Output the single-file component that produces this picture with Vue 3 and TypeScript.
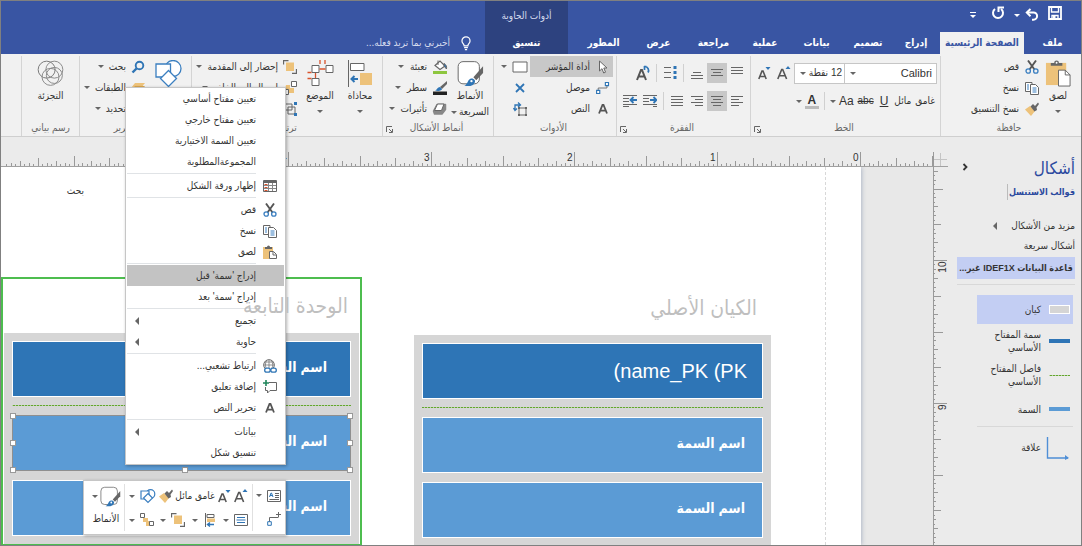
<script setup lang="ts">
import { ref } from 'vue'

interface MenuItem {
  label: string
  icon?: string
  submenu?: boolean
  active?: boolean
}

const tabs: { label: string; size: string }[] = [
  { label: 'إدراج', size: 's' },
  { label: 'تصميم', size: 's' },
  { label: 'بيانات', size: 'm' },
  { label: 'عملية', size: 's' },
  { label: 'مراجعة', size: 'm' },
  { label: 'عرض', size: 'm' },
  { label: 'المطور', size: 'm' },
]

const menuGroups: MenuItem[][] = [
  [
    { label: 'تعيين مفتاح أساسي' },
    { label: 'تعيين مفتاح خارجي' },
    { label: 'تعيين السمة الاختيارية' },
    { label: 'المجموعةالمطلوبة' },
  ],
  [{ label: 'إظهار ورقة الشكل', icon: 'sheet' }],
  [
    { label: 'قص', icon: 'cut' },
    { label: 'نسخ', icon: 'copy' },
    { label: 'لصق', icon: 'paste-small' },
  ],
  [{ label: "إدراج 'سمة' قبل", active: true }, { label: "إدراج 'سمة' بعد" }],
  [
    { label: 'تجميع', submenu: true },
    { label: 'حاوية', submenu: true },
  ],
  [
    { label: 'ارتباط تشعبي...', icon: 'globe' },
    { label: 'إضافة تعليق', icon: 'comment' },
    { label: 'تحرير النص', icon: 'letter' },
  ],
  [{ label: 'بيانات', submenu: true }, { label: 'تنسيق شكل' }],
]

const font = ref('Calibri')
const size = ref('12')

interface Tick {
  pos: number
  len: number
  label: string
}

const INCH = 143
function ticks(zero: number, from: number, to: number, dir: number, start: number): Tick[] {
  const out: Tick[] = []
  for (let k = from; k < to; k++) {
    const m = Math.abs(k) % 32
    const len = m === 0 ? 14 : m === 16 ? 10 : m % 8 === 0 ? 8 : m % 4 === 0 ? 5 : m % 2 === 0 ? 3 : 2
    const pos = Math.round(zero + (dir * k * INCH) / 32) + 0.5
    out.push({ pos, len, label: m === 0 ? String(start + dir * -k / 32) : '' })
  }
  return out
}
const horizontal = ticks(-88, -16, 192, -1, 0)
const vertical = ticks(93, -20, 64, 1, 10)
</script>

<template>
  <div class="app" dir="rtl">
    <svg class="defs" aria-hidden="true">
      <symbol id="save" viewBox="0 0 14 14">
        <path d="M1 1h12v12H1z" fill="none" stroke="#fff" stroke-width="1.8" />
        <path d="M3.5 1v5h7V1M4 13V9.500h6V13" fill="none" stroke="#fff" stroke-width="1.400" />
        <path d="M5 10h2.500v3H5z" fill="#fff" />
      </symbol>
      <symbol id="undo" viewBox="0 0 14 14">
        <path d="M2 4.500h6.500a3.600 3.600 0 0 1 0 7.200H7" fill="none" stroke="#fff" stroke-width="2" />
        <path d="M5.500 1L1.800 4.600 5.500 8.200" fill="none" stroke="#fff" stroke-width="2" />
      </symbol>
      <symbol id="redo" viewBox="0 0 14 14">
        <path d="M4 3a5 5 0 1 0 6 0" fill="none" stroke="#fff" stroke-width="2" />
        <path d="M7.500 6V1.500H13" fill="none" stroke="#fff" stroke-width="2" />
      </symbol>
      <symbol id="bulb" viewBox="0 0 12 16">
        <path d="M4 10.500C4 8.500 1.700 7.800 1.700 5.200a4.300 4.300 0 0 1 8.600 0C10.300 7.800 8 8.500 8 10.500z M4 12.500h4 M4.800 14.500h2.400" fill="none" stroke="#fff" stroke-width="1.300" />
      </symbol>
      <symbol id="paste" viewBox="0 0 26 28">
        <path d="M0 3h21v23H0z" fill="#edc27a" />
        <path d="M5 6V3h3.500a2.500 2.500 0 0 1 5 0H17v3z" fill="#666" />
        <circle cx="11" cy="2.800" r="1" fill="#fff" />
        <path d="M13 10.500h7l5 5V27H13z" fill="#fff" stroke="#666" />
        <path d="M20 10.500v5h5" fill="none" stroke="#666" />
      </symbol>
      <symbol id="paste-small" viewBox="0 0 14 14">
        <path d="M0 2h10v12H0z" fill="#edc27a" />
        <path d="M2 4V2h2a1.500 1.500 0 0 1 3 0h2v2z" fill="#666" />
        <path d="M6.500 6.500h4l3 3v4h-7z" fill="#fff" stroke="#666" />
        <path d="M10 7v3h3" fill="none" stroke="#666" />
      </symbol>
      <symbol id="cut" viewBox="0 0 14 14">
        <path d="M3 .5l6.500 9M11 .5l-6.500 9" stroke="#555" stroke-width="1.900" />
        <circle cx="3.200" cy="11" r="2.200" fill="none" stroke="#3b7fc0" stroke-width="1.300" />
        <circle cx="10.800" cy="11" r="2.200" fill="none" stroke="#3b7fc0" stroke-width="1.300" />
      </symbol>
      <symbol id="copy" viewBox="0 0 14 14">
        <path d="M.5 1.500H7v9H.5z" fill="#fff" stroke="#666" />
        <path d="M5.500 3.500h5l3 3v7h-8z" fill="#fff" stroke="#666" />
        <path d="M2 4h2M2 6h2M2 8h2M7.500 7h4M7.500 9h4M7.500 11h4" stroke="#3b7fc0" />
      </symbol>
      <symbol id="brush" viewBox="0 0 14 14">
        <path d="M0 7.500L5 4l5 5-4 5z" fill="#edc27a" />
        <path d="M5.500 4.500L8 2l2 2 3-3.500L14 2l-2.500 3.500L12 8l-2.500 1.500z" fill="#666" />
      </symbol>
      <symbol id="font-up" viewBox="0 0 14 14">
        <path d="M.8 13L4.700 3.500h1l3.900 9.500M2.300 9.800h5.800" fill="none" stroke="#555" stroke-width="1.600" />
        <path d="M8.500 3L11 0l2.500 3z" fill="#2f75b5" />
      </symbol>
      <symbol id="font-down" viewBox="0 0 14 14">
        <path d="M1.800 13L5 5h1l3.200 8M2.800 10.500h5.400" fill="none" stroke="#555" stroke-width="1.600" />
        <path d="M8.500 1L11 4l2.500-3z" fill="#2f75b5" />
      </symbol>
      <symbol id="rotate-text" viewBox="0 0 14 16">
        <path d="M1 15L5 5h1l4 10M2.500 11.500h6" fill="none" stroke="#555" stroke-width="2" />
        <path d="M8 1.500l2.500 0M8.500 1v4M9 1.500a4 4 0 0 1 3 6" fill="none" stroke="#2f75b5" stroke-width="1.700" />
      </symbol>
      <symbol id="bullets" viewBox="0 0 14 14">
        <path d="M1 1.500h7M1 6.500h7M1 11.500h7" stroke="#666" />
        <path d="M10.500 0h3v3h-3zM10.500 5h3v3h-3zM10.500 10h3v3h-3z" fill="#2f75b5" />
      </symbol>
      <symbol id="valign-top" viewBox="0 0 14 14">
        <path d="M1 1.500h12M1 4.500h12M1 7.500h12" stroke="#666" />
      </symbol>
      <symbol id="valign-mid" viewBox="0 0 14 14">
        <path d="M1 3.500h12M3 6.500h8M1 9.500h12" stroke="#666" />
      </symbol>
      <symbol id="valign-bot" viewBox="0 0 14 14">
        <path d="M3 6.500h8M1 9.500h12M1 12.500h12" stroke="#666" />
      </symbol>
      <symbol id="al-left" viewBox="0 0 14 14">
        <path d="M1 2.500h12M1 5.500h8M1 8.500h12M1 11.500h8" stroke="#666" />
      </symbol>
      <symbol id="al-center" viewBox="0 0 14 14">
        <path d="M1 2.500h12M3 5.500h8M1 8.500h12M3 11.500h8" stroke="#666" />
      </symbol>
      <symbol id="al-right" viewBox="0 0 14 14">
        <path d="M1 2.500h12M5 5.500h8M1 8.500h12M5 11.500h8" stroke="#666" />
      </symbol>
      <symbol id="al-just" viewBox="0 0 14 14">
        <path d="M1 2.500h12M1 5.500h12M1 8.500h12M1 11.500h12" stroke="#666" />
      </symbol>
      <symbol id="indent-r" viewBox="0 0 14 14">
        <path d="M0 1.500h14M0 4.500h6M0 7.500h6M0 10.500h14M10 12.500h4" stroke="#666" />
        <path d="M7 6h6M10.500 3l3 3-3 3" fill="none" stroke="#2f75b5" stroke-width="1.800" />
      </symbol>
      <symbol id="indent-l" viewBox="0 0 14 14">
        <path d="M0 1.500h14M0 4.500h6M0 7.500h6M0 10.500h14M0 12.500h6" stroke="#666" />
        <path d="M8 6h6M10.500 3l-3 3 3 3" fill="none" stroke="#2f75b5" stroke-width="1.800" />
      </symbol>
      <symbol id="launch" viewBox="0 0 7 7">
        <path d="M.5 6V.5H6M3 3l3 3M6.500 3v3.500H3" fill="none" stroke="#666" />
      </symbol>
      <symbol id="pointer" viewBox="0 0 10 14">
        <path d="M1.500 1v10l2.500-2.300L5.700 13l1.800-.8L5.800 8h3.200z" fill="#fff" stroke="#666" />
      </symbol>
      <symbol id="connector" viewBox="0 0 16 14">
        <path d="M2.500 10V7h10V4" fill="none" stroke="#666" />
        <path d="M.7 9.700h3.600v3.600H.7zM10.700.7h3.600v3.600h-3.600z" fill="#fff" stroke="#2f75b5" stroke-width="1.300" />
      </symbol>
      <symbol id="letter" viewBox="0 0 10 10">
        <path d="M1 9.500L4.500 1h1L9 9.500M2.400 6.600h5.200" fill="none" stroke="#555" stroke-width="1.800" />
      </symbol>
      <symbol id="rect" viewBox="0 0 16 12">
        <path d="M1 1h14v10H1z" fill="#fff" stroke="#666" />
      </symbol>
      <symbol id="cross" viewBox="0 0 10 10">
        <path d="M1 1l8 8M9 1l-8 8" stroke="#2f75b5" stroke-width="1.800" />
      </symbol>
      <symbol id="rotate-box" viewBox="0 0 14 14">
        <path d="M6 6h7v7H6z" fill="none" stroke="#666" />
        <path d="M5 5h2v2H5zM12 5h2v2h-2zM5 12h2v2H5zM12 12h2v2h-2z" fill="#666" />
        <path d="M2 8V3h5M.5 6L2 8.500 4 6.500M5 .5L7.500 3 5 5" fill="none" stroke="#2f75b5" stroke-width="1.300" />
      </symbol>
      <symbol id="quick" viewBox="0 0 27 28">
        <rect x=".7" y="1.700" width="22" height="23" rx="5" fill="#fff" stroke="#666" />
        <path d="M26.500 6.500v7L19.500 21l-3-3z" fill="#666" />
        <path d="M7 27c2-1 3-3 4.500-6 2-2.500 5-2 6.500 0 1 3-2 6-6 6z" fill="#2f75b5" />
        <circle cx="14.500" cy="22" r="1.200" fill="#fff" />
      </symbol>
      <symbol id="fill" viewBox="0 0 16 14">
        <path d="M3 5.500L8 1l5 5-5 3.500z" fill="#fff" stroke="#666" stroke-width="1.200" />
        <path d="M6 5V.5M12 3.500c2 1 3 3 2.500 5.500L12 6z" fill="#2f75b5" stroke="#666" />
        <path d="M1 11h14v3H1z" fill="#8dc63f" />
      </symbol>
      <symbol id="line" viewBox="0 0 16 14">
        <path d="M15 0v3l-5 5-2-2z" fill="#666" />
        <path d="M3 9.500c2-.5 2.500-3.500 5-3.500l2 2c0 1.500-3 2.500-7 1.500z" fill="#2f75b5" />
        <path d="M1 10.500h14V14H1z" fill="#222" />
      </symbol>
      <symbol id="effects" viewBox="0 0 16 14">
        <path d="M5 2.500h8.500v5L10 12H2.500L1.500 9z" fill="#888" stroke="#888" stroke-width="1.500" stroke-linejoin="round" />
        <path d="M5.500 2h6.500L9.500 8.500H2.500z" fill="#fff" stroke="#666" stroke-linejoin="round" />
      </symbol>
      <symbol id="align-objects" viewBox="0 0 27 27">
        <path d="M1.500 0v27" stroke="#666" />
        <path d="M3.500 3.500H17v7H3.500z" fill="#fff" stroke="#666" />
        <path d="M13 13h12v12H13z" fill="#edc27a" />
        <path d="M11 19H5M7.500 16l-3 3 3 3" fill="none" stroke="#2f75b5" stroke-width="2" />
      </symbol>
      <symbol id="position" viewBox="0 0 26 27">
        <path d="M4.500 5.500h7v7h-7zM18.500 5.500h7v7h-7zM4.500 18.500h7v7h-7z" fill="#fff" stroke="#666" />
        <path d="M12 9h6M8 13v5M12.500 0v4M17.500 0v4M0 12.500h4M0 18.500h4" stroke="#d9532c" stroke-width="1.300" />
      </symbol>
      <symbol id="front" viewBox="0 0 14 14">
        <path d="M3 2.500h8V11H3z" fill="#edc27a" />
        <path d="M.5 4.500v-4h5M13.500 9v4.500H9" fill="none" stroke="#666" stroke-width="1.300" />
      </symbol>
      <symbol id="back" viewBox="0 0 14 14">
        <path d="M3 4h4v3h4v5H5V8H1v5" fill="#edc27a" />
        <path d="M8.500.500h5v5h-5zM.5 8.500h5v5h-5z" fill="#fff" stroke="#666" />
      </symbol>
      <symbol id="group" viewBox="0 0 14 14">
        <path d="M2 2h7v6H2zM5 5h7v7H5z" fill="none" stroke="#666" />
        <path d="M11 0h3v3h-3zM11 11h3v3h-3zM0 11h3v3H0zM0 0h3v3H0z" fill="#2f75b5" />
      </symbol>
      <symbol id="shapes" viewBox="0 0 27 27">
        <circle cx="18" cy="8.500" r="8" fill="#fff" stroke="#3b7fc0" stroke-width="1.300" />
        <path d="M1 4h14.500v13H1z" fill="#fff" stroke="#3b7fc0" stroke-width="1.300" />
        <path d="M13.500 10.500l8 8-8 8-8-8z" fill="#fff" stroke="#3b7fc0" stroke-width="1.300" />
      </symbol>
      <symbol id="shapes-mini" viewBox="0 0 16 14">
        <circle cx="10.500" cy="5" r="4.300" fill="#fff" stroke="#3b7fc0" stroke-width="1.200" />
        <path d="M1 2h8v8H1z" fill="#fff" stroke="#3b7fc0" stroke-width="1.200" />
        <path d="M8 4.500L12.500 9 8 13.500 3.500 9z" fill="#fff" stroke="#3b7fc0" stroke-width="1.200" />
      </symbol>
      <symbol id="find" viewBox="0 0 14 14">
        <circle cx="8.500" cy="5.500" r="3.800" fill="none" stroke="#2f75b5" stroke-width="1.900" />
        <path d="M5.500 8.500L1.500 12.500" stroke="#2f75b5" stroke-width="2.400" />
      </symbol>
      <symbol id="layers" viewBox="0 0 14 14">
        <path d="M4 2h10l-4 5H0z" fill="#edc27a" />
        <path d="M4 5h10l-4 5H0z" fill="#d9a650" />
      </symbol>
      <symbol id="venn" viewBox="0 0 28 28">
        <circle cx="10" cy="10" r="8.800" fill="none" stroke="#777" />
        <circle cx="18" cy="10" r="8.800" fill="none" stroke="#888" />
        <circle cx="14" cy="17.500" r="8.800" fill="none" stroke="#888" />
        <circle cx="18" cy="16" r="8.300" fill="none" stroke="#888" />
      </symbol>
      <symbol id="sheet" viewBox="0 0 14 12">
        <path d="M.5.500h13v11H.5z" fill="#fff" stroke="#666" />
        <path d="M1 2h12" stroke="#666" stroke-width="2" />
        <path d="M5.500 3v8M9.500 3v8M1 5.500h12M1 8.500h12" stroke="#888" />
        <path d="M1.500 4.500h3M1.500 7.500h3M1.500 10.500h3" stroke="#d9532c" />
      </symbol>
      <symbol id="globe" viewBox="0 0 14 14">
        <circle cx="6" cy="6" r="5.300" fill="none" stroke="#666" />
        <path d="M6 .5v11M.7 6h10.600M1.500 3h9M3.500 1.500C2 4.500 2 8 4 11M8.500 1.500C10 4.500 10 7 9 9" fill="none" stroke="#777" stroke-width=".8" />
        <rect x="1.700" y="9.200" width="5.500" height="4" rx="2" fill="#fff" stroke="#2f75b5" stroke-width="1.300" />
        <rect x="7.800" y="9.200" width="5.500" height="4" rx="2" fill="#fff" stroke="#2f75b5" stroke-width="1.300" />
      </symbol>
      <symbol id="comment" viewBox="0 0 14 14">
        <path d="M6 2.500h7.500v8H7L4.500 13v-2.500h-2V7" fill="none" stroke="#666" />
        <path d="M3 0v6M0 3h6" stroke="#21875c" stroke-width="1.600" />
      </symbol>
      <symbol id="form" viewBox="0 0 14 12">
        <path d="M.5.500h13v11H.5z" fill="#fff" stroke="#666" />
        <path d="M2.500 7L4 3h.5L6 7M3 5.500h2.500" fill="none" stroke="#2f75b5" />
        <path d="M8 3.500h4M8 5.500h4M8 7.500h4M2.500 9.500H12" stroke="#666" />
      </symbol>
      <symbol id="add-connector" viewBox="0 0 14 14">
        <path d="M2.500 10V5.500h9M11.500 0v5M9 2.500h5" fill="none" stroke="#666" />
        <path d="M.7 9.700h3.600v3.600H.7z" fill="#fff" stroke="#2f75b5" />
      </symbol>
      <symbol id="textbox" viewBox="0 0 14 12">
        <path d="M.5.500h13v11H.5z" fill="#fff" stroke="#666" />
        <path d="M3 3.500h8M2.500 6h9M3 8.500h8" stroke="#2f75b5" />
      </symbol>
      <symbol id="align-mini" viewBox="0 0 14 14">
        <path d="M2.500 0v14" stroke="#666" />
        <path d="M4 1.500h7v3H4z" fill="#fff" stroke="#666" />
        <path d="M4 5.500h8V9H4z" fill="#edc27a" />
        <path d="M11 11.500H5M7 9.500l-2.500 2 2.500 2" fill="none" stroke="#2f75b5" stroke-width="1.400" />
      </symbol>
      <symbol id="group-mini" viewBox="0 0 14 14">
        <path d="M3 5h5v3h3v5H6V9H3z" fill="#edc27a" />
        <path d="M.5.500h4v4h-4zM9.500 8.500h4v4h-4z" fill="#fff" stroke="#666" />
      </symbol>
      <symbol id="link-shape" viewBox="0 0 24 24">
        <path d="M1.500 1v21H22" fill="none" stroke="#4f8fd6" stroke-width="1.400" />
        <path d="M19 19l4 3-4 2z" fill="#4f8fd6" />
      </symbol>
    </svg>

    <header class="titlebar">
      <div class="tab-zone">
        <div class="qat">
          <button class="plain" aria-label="حفظ"><svg class="i14"><use href="#save" /></svg></button>
          <button class="plain undo" aria-label="تراجع">
            <svg class="i14"><use href="#undo" /></svg><i class="caret light"></i>
          </button>
          <button class="plain" aria-label="إعادة"><svg class="i14"><use href="#redo" /></svg></button>
          <button class="plain more" aria-label="تخصيص"><i class="bar"></i><i class="caret light"></i></button>
        </div>
        <nav class="tabs">
          <button class="tab file">ملف</button>
          <button class="tab home">الصفحة الرئيسية</button>
          <button v-for="t in tabs" :key="t.label" class="tab" :class="t.size">{{ t.label }}</button>
        </nav>
      </div>
      <div class="context">
        <span>أدوات الحاوية</span>
        <button class="tab">تنسيق</button>
      </div>
      <button class="tellme"><svg class="bulb"><use href="#bulb" /></svg>أخبرني بما تريد فعله...</button>
    </header>

    <section class="ribbon">
      <div class="group g-clip">
        <div class="body">
          <button class="big">
            <svg class="i27"><use href="#paste" /></svg><span>لصق</span><i class="caret"></i>
          </button>
          <div class="col">
            <button class="row"><svg class="i14"><use href="#cut" /></svg>قص</button>
            <button class="row"><svg class="i14"><use href="#copy" /></svg>نسخ</button>
            <button class="row"><svg class="i14"><use href="#brush" /></svg>نسخ التنسيق</button>
          </div>
        </div>
        <footer>حافظة</footer>
      </div>

      <div class="group g-font">
        <div class="body lines">
          <div class="line">
            <label class="combo name">
              <select v-model="font" aria-label="الخط"><option>Calibri</option></select><i class="caret"></i>
            </label>
            <label class="combo size">
              <select v-model="size" aria-label="حجم الخط"><option value="12">12 نقطة</option></select><i class="caret"></i>
            </label>
            <button class="sq" aria-label="تكبير الخط"><svg class="i14"><use href="#font-up" /></svg></button>
            <button class="sq" aria-label="تصغير الخط"><svg class="i14"><use href="#font-down" /></svg></button>
          </div>
          <div class="line">
            <button class="txt">غامق</button>
            <button class="txt">مائل</button>
            <button class="txt under">U</button>
            <button class="txt strike">abc</button>
            <button class="txt large">Aa<i class="caret"></i></button>
            <i class="sep"></i>
            <button class="txt large"><b class="colour">A</b><i class="caret"></i></button>
          </div>
        </div>
        <footer>الخط<svg class="launch"><use href="#launch" /></svg></footer>
      </div>

      <div class="group g-para">
        <div class="body lines">
          <div class="line">
            <button class="sq" aria-label="أعلى"><svg class="i14"><use href="#valign-top" /></svg></button>
            <button class="sq on" aria-label="وسط"><svg class="i14"><use href="#valign-mid" /></svg></button>
            <button class="sq" aria-label="أسفل"><svg class="i14"><use href="#valign-bot" /></svg></button>
            <i class="sep"></i>
            <button class="sq" aria-label="تعداد"><svg class="i14"><use href="#bullets" /></svg></button>
            <i class="sep"></i>
            <button class="sq" aria-label="استدارة"><svg class="i16"><use href="#rotate-text" /></svg></button>
          </div>
          <div class="line">
            <button class="sq" aria-label="يسار"><svg class="i14"><use href="#al-left" /></svg></button>
            <button class="sq on" aria-label="توسيط"><svg class="i14"><use href="#al-center" /></svg></button>
            <button class="sq" aria-label="يمين"><svg class="i14"><use href="#al-right" /></svg></button>
            <button class="sq" aria-label="ضبط"><svg class="i14"><use href="#al-just" /></svg></button>
            <i class="sep"></i>
            <button class="sq" aria-label="زيادة"><svg class="i14"><use href="#indent-r" /></svg></button>
            <button class="sq" aria-label="إنقاص"><svg class="i14"><use href="#indent-l" /></svg></button>
          </div>
        </div>
        <footer>الفقرة<svg class="launch"><use href="#launch" /></svg></footer>
      </div>

      <div class="group g-tools">
        <div class="body">
          <div class="col wide">
            <button class="row on"><svg class="i14"><use href="#pointer" /></svg>أداة المؤشر</button>
            <button class="row"><svg class="i14"><use href="#connector" /></svg>موصل</button>
            <button class="row"><svg class="i10"><use href="#letter" /></svg>النص</button>
          </div>
          <div class="col">
            <button class="row" aria-label="مستطيل"><svg class="i16"><use href="#rect" /></svg><i class="caret"></i></button>
            <button class="row" aria-label="نقطة اتصال"><svg class="i10"><use href="#cross" /></svg></button>
            <button class="row" aria-label="كتلة نص"><svg class="i14"><use href="#rotate-box" /></svg></button>
          </div>
        </div>
        <footer>الأدوات</footer>
      </div>

      <div class="group g-styles">
        <div class="body">
          <button class="big">
            <svg class="i27"><use href="#quick" /></svg><span>الأنماط</span>
            <span class="pair">السريعة<i class="caret"></i></span>
          </button>
          <div class="col">
            <button class="row"><svg class="i16"><use href="#fill" /></svg>تعبئة<i class="caret"></i></button>
            <button class="row"><svg class="i16"><use href="#line" /></svg>سطر<i class="caret"></i></button>
            <button class="row"><svg class="i16"><use href="#effects" /></svg>تأثيرات<i class="caret"></i></button>
          </div>
        </div>
        <footer>أنماط الأشكال<svg class="launch"><use href="#launch" /></svg></footer>
      </div>

      <div class="group g-arrange">
        <div class="body">
          <button class="big">
            <svg class="i27"><use href="#align-objects" /></svg><span>محاذاة</span><i class="caret"></i>
          </button>
          <button class="big">
            <svg class="i27"><use href="#position" /></svg><span>الموضع</span><i class="caret"></i>
          </button>
          <div class="col">
            <button class="row"><svg class="i14"><use href="#front" /></svg>إحضار إلى المقدمة<i class="caret"></i></button>
            <button class="row"><svg class="i14"><use href="#back" /></svg>إرسال إلى الخلف<i class="caret"></i></button>
            <button class="row"><svg class="i14"><use href="#group" /></svg>تجميع<i class="caret"></i></button>
          </div>
        </div>
        <footer>ترتيب</footer>
      </div>

      <div class="group g-edit">
        <div class="body">
          <button class="big" aria-label="تغيير الشكل"><svg class="i27"><use href="#shapes" /></svg></button>
          <div class="col">
            <button class="row"><svg class="i14"><use href="#find" /></svg>بحث<i class="caret"></i></button>
            <button class="row"><svg class="i14"><use href="#layers" /></svg>الطبقات<i class="caret"></i></button>
            <button class="row"><svg class="i14"><use href="#pointer" /></svg>تحديد<i class="caret"></i></button>
          </div>
        </div>
        <footer>تحرير</footer>
      </div>

      <div class="group g-diagram">
        <div class="body">
          <button class="big"><svg class="i27"><use href="#venn" /></svg><span>التجزئة</span></button>
        </div>
        <footer>رسم بياني</footer>
      </div>
    </section>

    <main class="work">
      <aside class="panel">
        <div class="head"><h1>أشكال</h1><button class="plain chevron" aria-label="طي">
          <svg class="i10" viewBox="0 0 10 10"><path d="M3.500 2l3 3-3 3" fill="none" stroke="#333" stroke-width="1.800" /></svg>
        </button></div>
        <h2><a href="#">قوالب الاستنسل</a></h2>
        <button class="entry">مزيد من الأشكال<i class="tri"></i></button>
        <button class="entry">أشكال سريعة</button>
        <button class="entry stencil">قاعدة البيانات IDEF1X غير...</button>
        <ul class="masters">
          <li class="picked"><i class="thumb grey"></i><span>كيان</span></li>
          <li><i class="thumb dark"></i><span>سمة المفتاح الأساسي</span></li>
          <li><i class="thumb dots"></i><span>فاصل المفتاح الأساسي</span></li>
          <li><i class="thumb blue"></i><span>السمة</span></li>
          <li class="last"><svg class="thumb-link"><use href="#link-shape" /></svg><span>علاقة</span></li>
        </ul>
      </aside>

      <div class="drawing">
        <div class="ruler-h">
          <svg width="2000" height="30" viewBox="-2000 0 2000 30">
            <path d="M-2000 29.500H0" stroke="#a0a0a0" />
            <path v-for="t in horizontal" :key="t.pos" :d="`M${t.pos} ${29 - t.len}V29`" stroke="#999" />
            <template v-for="t in horizontal" :key="'n' + t.pos">
              <text v-if="t.label" :x="t.pos - 2" y="24" class="num">{{ t.label }}</text>
            </template>
            <path d="M-14.500 15V30" stroke="#999" />
            <path d="M-14 22.500H-1M-7.500 16V29" stroke="#c4c4c4" />
          </svg>
        </div>
        <div class="ruler-v">
          <svg width="15" height="1500" viewBox="0 0 15 1500">
            <path d="M.5 0V1500" stroke="#999" />
            <path v-for="t in vertical" :key="t.pos" :d="`M0 ${t.pos}H${t.len}`" stroke="#999" />
            <template v-for="t in vertical" :key="'n' + t.pos">
              <text v-if="t.label" class="num" :transform="`translate(13 ${t.pos + 1}) rotate(-90)`">{{ t.label }}</text>
            </template>
          </svg>
        </div>
        <div class="canvas">
          <div class="page"></div>
          <p class="note">بحث</p>

          <div class="entity parent">
            <h3>الكيان الأصلي</h3>
            <div class="box">
              <div class="attr key latin"><bdi dir="ltr">(name_PK (PK</bdi></div>
              <hr>
              <div class="attr">اسم السمة</div>
              <div class="attr">اسم السمة</div>
            </div>
          </div>

          <div class="entity child">
            <h3>الوحدة التابعة</h3>
            <div class="box">
              <div class="attr key">اسم السمة</div>
              <hr>
              <div class="attr selected">
                اسم السمة
                <i v-for="h in ['tl', 'tr', 'ml', 'mr', 'bl', 'bc', 'br']" :key="h" class="handle" :class="h"></i>
              </div>
              <div class="attr">اسم السمة</div>
            </div>
          </div>
        </div>
      </div>
    </main>

    <div class="menu" role="menu">
      <div v-for="(g, i) in menuGroups" :key="i" class="menu-group">
        <button v-for="m in g" :key="m.label" role="menuitem" class="item" :class="{ active: m.active }">
          <span class="slot"><svg v-if="m.icon" :class="m.icon === 'letter' ? 'i10' : 'i14'"><use :href="'#' + m.icon" /></svg></span>
          <span class="name">{{ m.label }}</span>
          <i v-if="m.submenu" class="tri"></i>
        </button>
      </div>
    </div>

    <div class="mini" role="toolbar">
      <div class="mini-col">
        <button class="mb" aria-label="نموذج"><svg class="i14"><use href="#form" /></svg><i class="caret"></i></button>
        <button class="mb" aria-label="موصل"><svg class="i14"><use href="#add-connector" /></svg></button>
      </div>
      <div class="mini-col mid">
        <div class="mini-line">
          <button class="mb" aria-label="تكبير"><svg class="i14"><use href="#font-up" /></svg></button>
          <button class="mb" aria-label="تصغير"><svg class="i14"><use href="#font-down" /></svg></button>
          <button class="mb">غامق</button>
          <button class="mb">مائل</button>
          <button class="mb" aria-label="نسخ التنسيق"><svg class="i14"><use href="#brush" /></svg></button>
          <button class="mb" aria-label="الشكل"><svg class="i16"><use href="#shapes-mini" /></svg><i class="caret"></i></button>
        </div>
        <div class="mini-line">
          <button class="mb" aria-label="نص"><svg class="i14"><use href="#textbox" /></svg><i class="caret"></i></button>
          <button class="mb" aria-label="محاذاة"><svg class="i14"><use href="#align-mini" /></svg><i class="caret"></i></button>
          <button class="mb" aria-label="إلى الأمام"><svg class="i14"><use href="#front" /></svg><i class="caret"></i></button>
          <button class="mb" aria-label="تجميع"><svg class="i14"><use href="#group-mini" /></svg><i class="caret"></i></button>
        </div>
      </div>
      <button class="mini-style">
        <span class="pair"><svg class="i21"><use href="#quick" /></svg><i class="caret"></i></span>
        <span>الأنماط</span>
      </button>
    </div>
  </div>
</template>

<style>
body {
  margin: 0;
}
</style>

<style scoped>
* {
  box-sizing: border-box;
}
.app {
  position: relative;
  display: flex;
  flex-direction: column;
  min-height: 100vh;
  overflow: hidden;
  border: 1px solid #808080;
  background: #ebebeb;
  color: #333;
  font: 10px/14px 'Liberation Sans', 'DejaVu Sans Condensed', 'DejaVu Sans', sans-serif;
}
.defs {
  position: absolute;
  width: 0;
  height: 0;
}
button {
  padding: 0;
  border: 0;
  background: none;
  color: inherit;
  font: inherit;
  white-space: nowrap;
}
svg {
  flex: none;
}
.i10 { width: 10px; height: 10px; }
.i14 { width: 14px; height: 14px; }
.i16 { width: 16px; height: 16px; }
.i21 { width: 21px; height: 21px; }
.i27 { width: 27px; height: 27px; }
.caret {
  flex: none;
  border: 3px solid transparent;
  border-top-color: #666;
  border-bottom-width: 0;
}
.caret.light { border-top-color: #fff; }
.tri {
  border: 4px solid transparent;
  border-right-color: #666;
  border-left-width: 0;
}

/* title bar */
.titlebar {
  display: flex;
  height: 53px;
  background: #3955a3;
  color: #fff;
}
.tab-zone {
  display: flex;
  flex-direction: column;
  justify-content: space-between;
  padding-left: 8px;
}
.qat {
  display: flex;
  align-items: center;
  gap: 9px;
  height: 28px;
  padding-right: 19px;
}
.undo {
  display: flex;
  align-items: center;
  gap: 5px;
}
.qat .more {
  display: flex;
  flex-direction: column;
  gap: 2px;
  margin-right: 6px;
}
.bar {
  width: 6px;
  height: 1px;
  background: #fff;
}
.tabs {
  display: flex;
}
.tab {
  height: 22px;
  font-weight: bold;
}
.tab.file { width: 57px; }
.tab.home {
  width: 84px;
  background: #f1f1f1;
  color: #3955a3;
}
.tab.s { width: 48px; }
.tab.m { width: 55px; }
.context {
  display: flex;
  flex-direction: column;
  align-items: center;
  justify-content: space-between;
  width: 83px;
  padding-top: 8px;
  background: #2d427f;
  color: #d5dbee;
}
.context .tab { color: #fff; }
.tellme {
  display: flex;
  align-items: center;
  align-self: flex-end;
  gap: 10px;
  height: 22px;
  padding-right: 13px;
  color: #d5dbee;
}
.bulb { width: 12px; height: 15px; }

/* ribbon */
.ribbon {
  display: flex;
  padding-top: 2px;
  border-bottom: 1px solid #cfcfcf;
  background: #f1f1f1;
}
.group {
  display: flex;
  flex: none;
  flex-direction: column;
  position: relative;
  padding-right: 3px;
  border-left: 1px solid #d4d4d4;
}
.g-clip { width: 141px; padding-right: 4px; }
.g-font { width: 190px; }
.g-para { width: 134px; }
.g-tools { width: 123px; }
.g-styles { width: 111px; }
.g-arrange { width: 191px; padding-right: 2px; }
.g-edit { width: 112px; }
.g-diagram { width: 58px; padding-right: 0; }
.body {
  display: flex;
  height: 63px;
}
.body.lines {
  flex-direction: column;
  padding: 3px 0 4px;
}
.group footer {
  position: relative;
  height: 17px;
  padding-top: 2px;
  color: #666;
  text-align: center;
}
.g-edit footer { padding-right: 20px; }
.launch {
  position: absolute;
  bottom: 3px;
  left: 3px;
  width: 7px;
  height: 7px;
}
.big {
  display: flex;
  flex: none;
  flex-direction: column;
  align-items: center;
  width: 40px;
  padding-top: 4px;
}
.g-clip .big { width: 38px; }
.g-clip .row { padding: 0; }
.big span { margin-top: 2px; }
.big .caret { margin-top: 7px; }
.pair {
  display: flex;
  align-items: center;
  gap: 2px;
}
.big .pair .caret { margin-top: 0; }
.g-diagram .big { width: 57px; }
.col {
  display: flex;
  flex-direction: column;
}
.col.wide { width: 83px; }
.row {
  display: flex;
  align-items: center;
  gap: 6px;
  height: 21px;
  padding: 0 3px;
}
.row .i16 { margin: 0 -1px; }
.row .i10 { margin: 0 2px; }
.g-arrange .row, .g-edit .row { gap: 5px; }
.row.on, .sq.on { background: #c8c8c8; }
.line {
  display: flex;
  align-items: center;
  height: 28px;
}
.sq {
  display: flex;
  align-items: center;
  justify-content: center;
  width: 20px;
  height: 20px;
}
.sep {
  width: 1px;
  height: 18px;
  margin: 0 3px;
  background: #d0d0d0;
}
.combo {
  display: flex;
  align-items: center;
  height: 21px;
  padding-left: 5px;
  border: 1px solid #c6c6c6;
  background: #fff;
}
.combo.name { width: 93px; }
.combo.size { width: 50px; border-right: 0; }
.combo select {
  flex: 1;
  min-width: 0;
  height: 18px;
  padding: 0 4px 0 0;
  border: 0;
  appearance: none;
  background: none;
  color: #333;
  font: inherit;
  font-size: 11px;
}
.combo.size select { padding-right: 2px; font-size: 10px; }
.txt {
  display: flex;
  align-items: center;
  gap: 3px;
  padding: 0 2px;
}
.under { padding: 0 4px; font-size: 12px; text-decoration: underline; }
.strike { text-decoration: line-through; }
.large { font-size: 12px; }
.colour {
  width: 14px;
  border-bottom: 3px solid #bbb;
  line-height: 12px;
  text-align: center;
}

/* stencil panel */
.work {
  display: flex;
  flex: 1;
}
.panel {
  flex: none;
  width: 133px;
  padding: 20px 6px 0 0;
}
.head {
  display: flex;
  align-items: center;
  justify-content: space-between;
  height: 24px;
  padding-left: 12px;
}
h1 {
  margin: 0;
  color: #2b4a9f;
  font-size: 17px;
  font-weight: normal;
  line-height: 24px;
}
h2 {
  width: fit-content;
  margin: 3px 0 16px;
  padding-left: 1px;
  border-left: 1px solid #bbb;
  font-size: 9px;
  line-height: 16px;
  white-space: nowrap;
}
h2 a {
  color: #2b4a9f;
  text-decoration: none;
}
.entry {
  display: flex;
  align-items: center;
  gap: 14px;
  height: 20px;
}
.stencil {
  justify-content: center;
  width: 118px;
  height: 22px;
  margin-top: 1px;
  background: #c3cef3;
  font-size: 9px;
  font-weight: bold;
}
.masters {
  width: 118px;
  margin: 5px 0 0;
  padding: 10px 2px 0 20px;
  border-top: 1px solid #d8d8d8;
  list-style: none;
}
.masters li {
  display: flex;
  align-items: center;
  gap: 8px;
  min-height: 34px;
  padding-right: 3px;
  line-height: 13px;
}
.masters .picked {
  min-height: 29px;
  background: #c3cef3;
}
.masters .last {
  min-height: 42px;
  gap: 5px;
  border-top: 1px solid #d8d8d8;
}
.thumb {
  flex: none;
  width: 21px;
  height: 4px;
}
.grey {
  height: 9px;
  border: 1px solid #fff;
  background: #d5d5d5;
}
.dark { background: #2e75b6; }
.blue { background: #5b9bd5; }
.dots, .box hr {
  height: 1px;
  background: repeating-linear-gradient(to left, #63a52e 0 2px, #b9d3a4 2px 3px);
}
.thumb-link { width: 24px; height: 24px; }

/* drawing */
.drawing {
  display: grid;
  flex: 1;
  grid-template: 30px 1fr / 15px 1fr;
  min-width: 0;
}
.ruler-h {
  display: flex;
  grid-column: 1 / 3;
  overflow: hidden;
}
.ruler-v {
  position: relative;
  overflow: hidden;
}
.ruler-v svg {
  position: absolute;
  top: 0;
  right: 0;
}
.num {
  direction: ltr;
  fill: #333;
  font-family: 'Liberation Sans', sans-serif;
  font-size: 10px;
  text-anchor: end;
}
.canvas {
  position: relative;
  overflow: hidden;
  background: #e8e8e8;
}
.page {
  height: 100%;
  margin-right: 72px;
  padding-right: 35px;
  background: #fff;
  box-shadow: 0 0 5px #98a4b8;
}
.page::before {
  display: block;
  height: 100%;
  border-right: 1px dashed #d8d8d8;
  content: '';
}
.note {
  position: absolute;
  top: 17px;
  right: 849px;
  margin: 0;
}
.entity { position: absolute; }
.entity h3 {
  margin: 0;
  color: #bfbfbf;
  font-size: 21px;
  font-weight: normal;
  line-height: 54px;
}
.parent {
  top: 114px;
  right: 162px;
  width: 357px;
}
.parent h3 { padding-right: 14px; }
.child {
  top: 110px;
  right: 571px;
  width: 361px;
  padding: 0 1px;
  border: 2px solid #4dbd4f;
}
.child h3 {
  position: relative;
  z-index: 3;
  padding-right: 11px;
}
.box {
  padding: 8px;
  background: #d6d6d6;
}
.box hr {
  margin: 8px 0 9px;
  border: 0;
}
.attr {
  position: relative;
  height: 56px;
  padding-right: 17px;
  border: 1px solid #fff;
  background: #5b9bd5;
  color: #fff;
  font-size: 14px;
  font-weight: bold;
  line-height: 50px;
}
.attr + .attr { margin-top: 9px; }
.attr.key { background: #2e75b6; }
.attr.latin { padding-right: 15px; font-size: 20px; font-weight: normal; line-height: 54px; }
.child .attr { padding-right: 23px; }
.attr.selected { border-color: #8f8f8f; }
.handle {
  position: absolute;
  width: 6px;
  height: 6px;
  border: 1px solid #999;
  background: #fff;
}
.tl, .tr { top: -3px; }
.bl, .br, .bc { bottom: -3px; }
.ml, .mr { top: 24px; }
.tl, .ml, .bl { left: -3px; }
.tr, .mr, .br { right: -3px; }
.bc { left: 50%; }

/* context menu */
.menu {
  position: absolute;
  z-index: 2;
  top: 86px;
  right: 795px;
  width: 161px;
  padding: 0 1px 1px;
  border: 1px solid #c6c6c6;
  background: #fff;
  box-shadow: 1px 1px 3px rgba(0, 0, 0, 0.3);
}
.menu-group + .menu-group::before {
  display: block;
  height: 3px;
  margin-right: 28px;
  background: linear-gradient(#fff 1px, #e0e3e6 1px, #e0e3e6 2px, #fff 2px);
  content: '';
}
.item {
  display: flex;
  align-items: center;
  width: 100%;
  height: 21px;
  padding-left: 8px;
}
.item.active { background: #c3c3c3; }
.slot {
  display: flex;
  justify-content: center;
  width: 28px;
}
.item .name { margin-left: auto; }

/* mini toolbar */
.mini {
  position: absolute;
  z-index: 2;
  top: 479px;
  right: 795px;
  display: flex;
  width: 203px;
  height: 55px;
  padding: 3px 4px;
  border: 1px solid #c6c6c6;
  background: #fff;
  box-shadow: 1px 1px 3px rgba(0, 0, 0, 0.3);
}
.mini-col {
  display: flex;
  flex-direction: column;
}
.mini-col.mid {
  flex: 1;
  margin-right: 3px;
  padding: 0 4px;
  border: 1px solid #e0e0e0;
  border-width: 0 1px;
}
.mini-line {
  display: flex;
  justify-content: space-between;
}
.mb {
  display: flex;
  align-items: center;
  gap: 5px;
  height: 24px;
}
.mini-style {
  display: flex;
  flex-direction: column;
  align-items: center;
  width: 36px;
  gap: 5px;
  padding-top: 2px;
}
</style>
